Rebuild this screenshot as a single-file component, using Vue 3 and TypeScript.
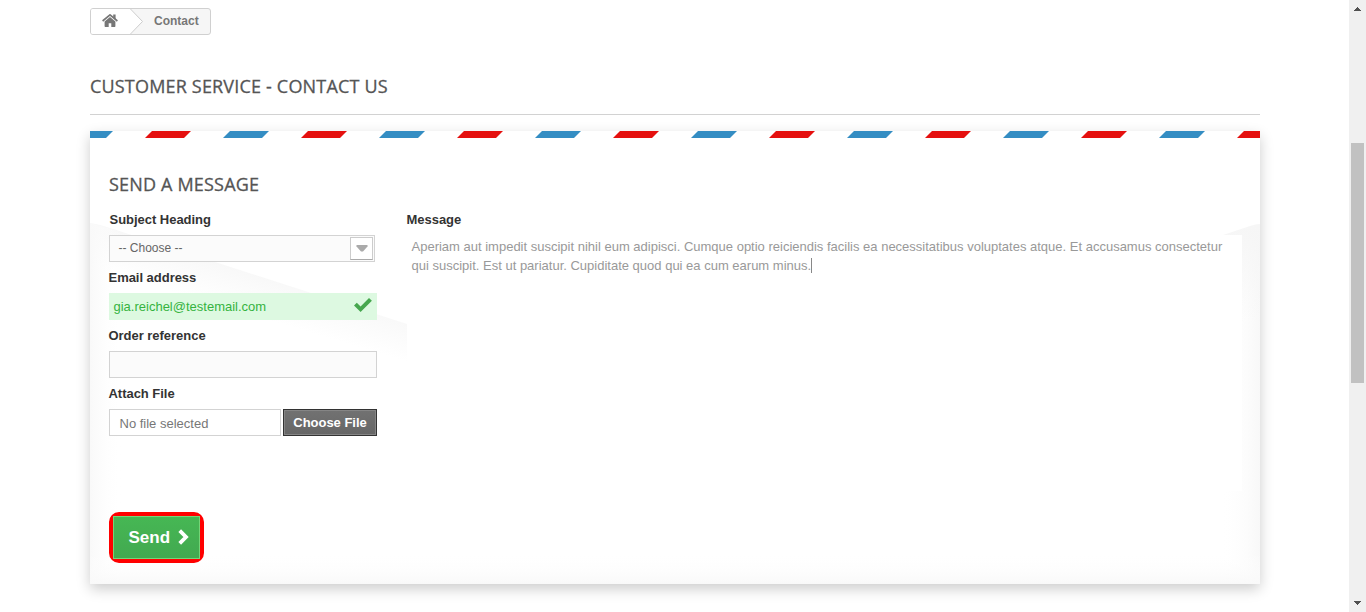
<script setup lang="ts">
import { ref } from 'vue'

const email = ref('gia.reichel@testemail.com')
const stripes = Array.from({ length: 16 }, (_, i) => ({
  points: `${i * 78 - 23},7 ${i * 78 + 16},7 ${i * 78 + 23},0 ${i * 78 - 16},0`,
  fill: i % 2 ? '#e5100f' : '#348dc3',
}))
</script>

<template>
  <div class="page">
    <main class="content">
      <nav class="crumbs">
        <a class="home">
          <svg width="16" height="13" viewBox="0 0 16 13">
            <path fill="#777" d="M8 3 13.4 7.5V12.2Q13.4 13 12.6 13H9.3V9.2H6.7V13H3.4Q2.6 13 2.6 12.2V7.5Z" />
            <path fill="none" stroke="#777" stroke-width="1.7" d="M.6 7 8 .9 15.4 7" />
            <path fill="#777" d="M11.2 .6H13.6V5.4L11.2 3.5Z" />
          </svg>
        </a>
        <svg class="chev" width="15" height="25" viewBox="0 0 15 25">
          <path fill="#fff" d="M0 0H1L12.5 12.5 1 25H0Z" />
          <path fill="none" stroke="#ccc" d="M.5 0 12.5 12.5 .5 25" />
        </svg>
        <span class="here">Contact</span>
      </nav>
      <h1><span>CUSTOMER SERVICE - CONTACT US</span></h1>
      <form class="card" @submit.prevent>
        <svg class="backdrop" width="1170" height="453" viewBox="0 0 1170 453">
          <defs>
            <linearGradient id="fold" gradientUnits="userSpaceOnUse" x1="130" y1="131" x2="118" y2="171">
              <stop offset="0" stop-color="#f8f8f8" /><stop offset="1" stop-color="#fff" />
            </linearGradient>
            <linearGradient id="foldRight" gradientUnits="userSpaceOnUse" x1="1150" y1="95" x2="1165" y2="190">
              <stop offset="0" stop-color="#f6f6f6" /><stop offset="1" stop-color="#f6f6f6" stop-opacity="0" />
            </linearGradient>
            <linearGradient id="edgeLeft"><stop offset="0" stop-color="#f9f9f9" /><stop offset="1" stop-color="#fff" stop-opacity="0" /></linearGradient>
            <linearGradient id="edgeRight"><stop offset="0" stop-color="#fff" stop-opacity="0" /><stop offset="1" stop-color="#f8f8f8" /></linearGradient>
            <linearGradient id="edgeBottom" x2="0" y2="1"><stop offset="0" stop-color="#fff" stop-opacity="0" /><stop offset="1" stop-color="#f9f9f9" /></linearGradient>
          </defs>
          <path fill="url(#fold)" d="M0 92 Q8 93 20 97L317 193V280H0Z" />
          <path fill="url(#edgeLeft)" d="M0 92 32 101V453H0Z" />
          <path fill="url(#edgeRight)" d="M1130 105 1170 93V453H1130Z" />
          <path fill="url(#foldRight)" d="M1130 105 1160 95Q1166 93 1170 93V240H1130Z" />
          <rect fill="url(#edgeBottom)" y="422" width="1170" height="31" />
          <polygon v-for="s in stripes" :key="s.points" :points="s.points" :fill="s.fill" />
        </svg>
        <h2><span>SEND A MESSAGE</span></h2>
        <div class="columns">
          <div class="fields">
            <label class="nudge">Subject Heading</label>
            <div class="select">
              <span>-- Choose --</span>
              <i><svg width="12" height="7" viewBox="0 0 12 7"><path fill="#aaa" d="M.5 0h11v1.5L7 6.5H5L.5 1.5Z" /></svg></i>
            </div>
            <label>Email address</label>
            <div class="field valid">
              <span>{{ email }}</span>
              <svg width="18" height="14" viewBox="0 0 18 14"><path fill="#46a74e" d="M0 7.4 2.8 4.7 6.6 8.4 15 0 17.9 2.7 6.6 14Z" /></svg>
            </div>
            <label>Order reference</label>
            <div class="field"></div>
            <label>Attach File</label>
            <div class="file">
              <span class="name">No file selected</span>
              <span class="choose">Choose File</span>
            </div>
          </div>
          <div class="message">
            <label>Message</label>
            <div class="area">
              Aperiam aut impedit suscipit nihil eum adipisci. Cumque optio reiciendis facilis ea necessitatibus voluptates atque. Et accusamus consectetur<br />qui suscipit. Est ut pariatur. Cupiditate quod qui ea cum earum minus.<b class="caret"></b>
            </div>
          </div>
        </div>
        <button class="send" type="submit">
          <span>Send
            <svg width="11" height="16" viewBox="0 0 11 16"><path fill="none" stroke="#fff" stroke-width="3.8" stroke-linejoin="miter" d="M1.7 1.7 8 8 1.7 14.3" /></svg>
          </span>
        </button>
      </form>
    </main>
    <aside class="scrollbar">
      <svg width="7" height="4" viewBox="0 0 7 4" shape-rendering="crispEdges"><path fill="#505050" d="M3 0h1v1h1v1h1v1h1v1H0V3h1V2h1V1h1z" /></svg>
      <div class="thumb"></div>
      <svg width="7" height="4" viewBox="0 0 7 4" shape-rendering="crispEdges"><path fill="#505050" d="M0 0h7v1H6v1H5v1H4v1H3V3H2V2H1V1H0z" /></svg>
    </aside>
  </div>
</template>

<style>
body { margin: 0; background: #fff; }
</style>

<style scoped>
* { box-sizing: border-box; }
.page { display: flex; justify-content: space-between; height: 612px; overflow: hidden; font: 13px/18px "Liberation Sans", Arial, sans-serif; color: #777; }
.content { width: 1170px; margin-left: 90px; padding-top: 8px; }
.crumbs { display: flex; width: 121px; height: 27px; border: 1px solid #d0d0d0; border-radius: 3px; overflow: hidden; font-weight: bold; font-size: 12px; background: #f6f6f6; }
.home { width: 39px; background: #fff; padding: 5px 0 0 11px; }
.home svg { display: block; }
.here { padding: 3px 0 0 9px; line-height: 18px; }
h1, h2 { margin: 0; font: 400 18px/22px "Open Sans", sans-serif; color: #555; letter-spacing: .18px; -webkit-text-stroke: .3px #555; }
h1 { height: 80px; padding-top: 40px; border-bottom: 1px solid #d2d2d2; }
.card { position: relative; height: 453px; margin-top: 16px; padding: 42px 19px 0; background: #fff; box-shadow: 0 5px 13px rgba(0, 0, 0, .2); }
.backdrop { position: absolute; inset: 0; }
h2, .columns, .send { position: relative; }
.columns { display: flex; gap: 30px; margin-top: 14px; height: 303px; }
.fields { width: 268px; }
label { display: block; height: 26px; padding-top: 2px; font-weight: bold; color: #333; letter-spacing: -.03px; margin-left: -.5px; }
.field + label, .select + label { height: 27px; padding-top: 3px; }
.nudge { padding-left: 1px; }
.field, .select { height: 27px; margin-bottom: 4px; border: 1px solid #d3d3d3; background: #fbfbfb; }
.select { width: 266px; display: flex; justify-content: space-between; font-size: 12px; color: #666; padding: 1px 1px 1px 8.5px; line-height: 23px; }
.select i { display: flex; width: 23px; height: 23px; border: 1px solid #ccc; border-bottom-color: #aaa; background: #fff; align-items: center; justify-content: center; }
.valid { display: flex; justify-content: space-between; border: 0; padding: 5px 5.5px 0 4.5px; background: #ddf9e1; color: #35b33f; }
.file { display: flex; gap: 2px; height: 27px; }
.name { width: 172px; border: 1px solid #d3d3d3; background: #fff; padding: 5px 0 0 9.5px; }
.choose { width: 94px; background: linear-gradient(#727272, #666); border: 1px solid #333; box-shadow: inset 0 0 0 1px #858585; color: #fff; font-weight: bold; text-align: center; line-height: 25px; letter-spacing: -.03px; }
.message { width: 835px; margin-right: -1px; }
.area { height: 256px; padding: 2px 4.5px; background: #fff; line-height: 19px; color: #999; white-space: nowrap; }
.caret { display: inline-block; width: 1px; height: 15px; background: #888; vertical-align: -3px; }
.send { display: block; width: 95px; height: 51px; margin: 0; padding: 0; border: 4px solid #f00; border-radius: 10px; background: #f00; font: bold 17px/41px "Liberation Sans", Arial, sans-serif; color: #fff; }
.send > span { display: flex; height: 43px; border: 1px solid #74d578; background: linear-gradient(#46b754, #42a950); padding: 0 0 1px 14.5px; align-items: center; gap: 8px; }
.scrollbar { display: flex; flex-direction: column; align-items: center; width: 17px; background: #f0f0f0; padding-top: 7px; }
.scrollbar svg { display: block; }
.thumb { width: 13px; height: 240px; margin: 132px 0 218px; background: #c1c1c1; }
</style>
